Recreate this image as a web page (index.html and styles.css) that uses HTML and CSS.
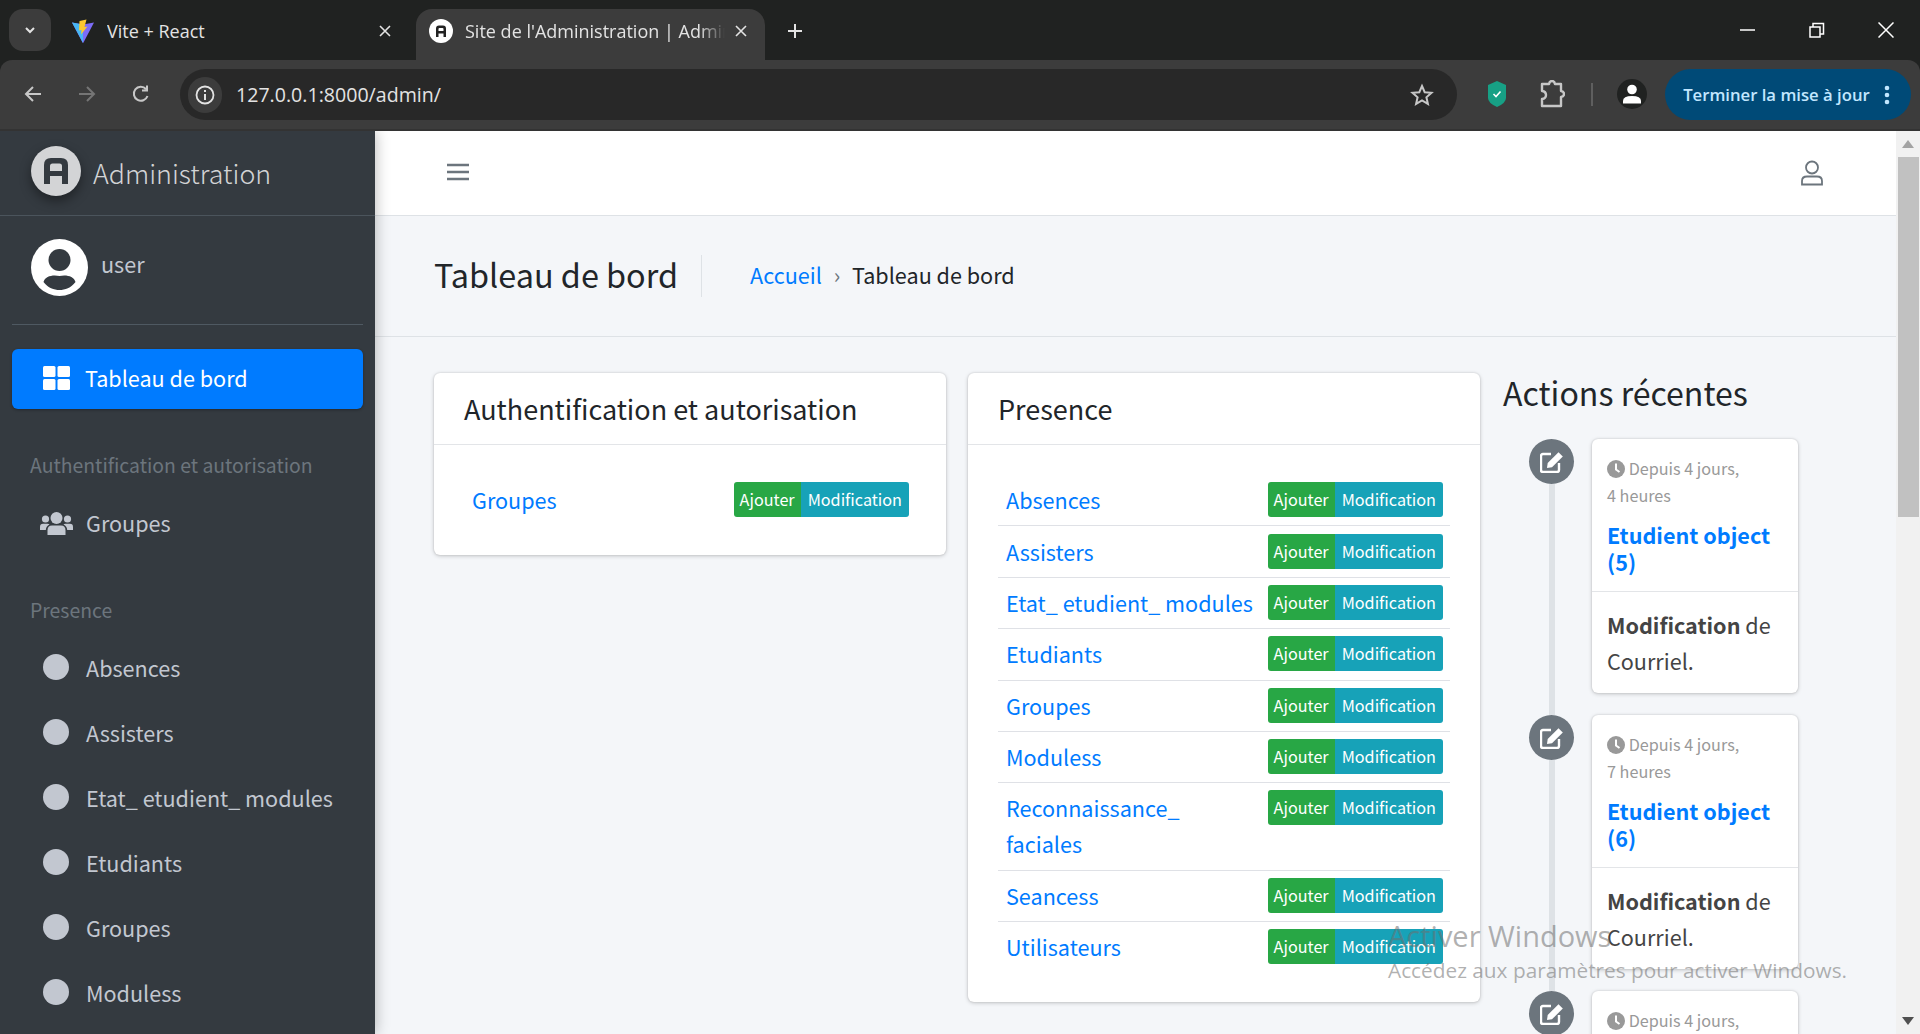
FILE: index.html

```html
<!DOCTYPE html>
<html lang="fr">
<head>
    <meta charset="utf-8">
    <title>Site de l'Administration</title>
    <link rel="stylesheet" href="styles.css">
</head>
<body>
    <!-- browser tabs -->
    <div class="tabstrip">
        <div class="tab-menu">
            <svg width="14" height="14" viewBox="0 0 14 14"><path d="M3 5l4 4 4-4" fill="none" stroke="#e3e3e3" stroke-width="2"/></svg>
        </div>
        <div class="tab">
            <svg class="favicon" width="24" height="24" viewBox="0 0 24 24">
                <path d="M1 3.5L12 5.5 23 3.5 12.500 23.500a.6 .6 0 0 1-1 0z" fill="#7c6cf7"/>
                <path d="M1 3.500L12 5.500 12 23.800z" fill="#47b8f5"/>
                <path d="M15.500 .5L8.500 2 8 11.500 10.500 11 10 15.500 16.500 7.500 13.500 8z" fill="#fdc82f"/>
            </svg>
            <span class="tab-title">Vite + React</span>
            <svg class="tab-close" width="12" height="12" viewBox="0 0 12 12"><path d="M1 1l10 10M11 1L1 11" stroke="#e3e3e3" stroke-width="1.600"/></svg>
        </div>
        <div class="tab tab-active">
            <svg class="favicon" width="24" height="24" viewBox="0 0 24 24">
                <circle cx="12" cy="12" r="12" fill="#fff"/>
                <path d="M7 18V9.500Q7 6.500 10 6.500H14Q17 6.500 17 9.500V18H14.500V14.500H9.500V18zM9.500 12H14.500V10Q14.500 9 13.500 9H10.500Q9.500 9 9.500 10z" fill="#222"/>
            </svg>
            <span class="tab-title tab-fade">Site de l'Administration | Admin</span>
            <svg class="tab-close" width="12" height="12" viewBox="0 0 12 12"><path d="M1 1l10 10M11 1L1 11" stroke="#e3e3e3" stroke-width="1.600"/></svg>
        </div>
        <div class="tab-new">
            <svg width="18" height="18" viewBox="0 0 18 18"><path d="M9 2v14M2 9h14" stroke="#e3e3e3" stroke-width="2"/></svg>
        </div>
        <div class="win-controls">
            <svg width="16" height="16" viewBox="0 0 16 16"><path d="M0 8h15" stroke="#fff" stroke-width="1.500"/></svg>
            <svg width="16" height="16" viewBox="0 0 16 16"><path d="M1 5h10v10H1zM4 5V1.500h10.500V12H11" fill="none" stroke="#fff" stroke-width="1.500"/></svg>
            <svg width="16" height="16" viewBox="0 0 16 16"><path d="M.5 .5l15 15M15.500 .5l-15 15" stroke="#fff" stroke-width="1.500"/></svg>
        </div>
    </div>

    <!-- browser toolbar -->
    <div class="toolbar">
        <svg class="nav-btn" width="20" height="20" viewBox="0 0 20 20"><path d="M18 10H3M10 3l-7 7 7 7" fill="none" stroke="#c7c7c7" stroke-width="2"/></svg>
        <svg class="nav-btn" width="20" height="20" viewBox="0 0 20 20"><path d="M2 10h15M10 3l7 7-7 7" fill="none" stroke="#757575" stroke-width="2"/></svg>
        <svg class="nav-btn" width="20" height="20" viewBox="0 0 20 20"><path d="M16.500 12a7 7 0 1 1-1.500-7M16 1.500V6.500H11" fill="none" stroke="#c7c7c7" stroke-width="2"/></svg>
        <div class="address">
            <div class="site-info">
                <svg width="20" height="20" viewBox="0 0 20 20"><circle cx="10" cy="10" r="8.500" fill="none" stroke="#e3e3e3" stroke-width="1.800"/><path d="M10 9v6M10 5v2" stroke="#e3e3e3" stroke-width="2"/></svg>
            </div>
            <span class="url">127.0.0.1:8000/admin/</span>
            <svg class="star" width="24" height="24" viewBox="0 0 24 24"><path d="M12 3l2.700 6.200 6.800 .6-5.100 4.500 1.500 6.600L12 17.400 6.100 20.900l1.500-6.600L2.500 9.800l6.800-.6z" fill="none" stroke="#c7c7c7" stroke-width="2"/></svg>
        </div>
        <svg class="shield" width="18" height="26" viewBox="0 0 18 26"><path d="M9 0L18 4V17Q18 22 9 26 0 22 0 17V4z" fill="#17a085"/><path d="M5.500 13l2.500 2.500 4.500-5" fill="none" stroke="#fff" stroke-width="1.600"/></svg>
        <svg class="puzzle" width="26" height="28" viewBox="0 0 26 28"><path d="M3 4H10Q10.500 1 13 1T16 4H22V11Q25 11.500 25 14T22 17V26H3V19Q7 18.500 7 15T3 11z" fill="none" stroke="#c7c7c7" stroke-width="2.400" stroke-linejoin="round"/></svg>
        <div class="tool-sep"></div>
        <div class="profile">
            <svg width="20" height="20" viewBox="0 0 20 20"><circle cx="10" cy="5.500" r="4.800" fill="#fff"/><path d="M1 19.500V17Q1 12 10 12T19 17V19.500z" fill="#fff"/></svg>
        </div>
        <div class="update">
            <span>Terminer la mise à jour</span>
            <svg width="6" height="20" viewBox="0 0 6 20"><circle cx="3" cy="3" r="2.300"/><circle cx="3" cy="10" r="2.300"/><circle cx="3" cy="17" r="2.300"/></svg>
        </div>
    </div>

    <div class="page">
        <!-- left menu -->
        <aside class="sidebar">
            <div class="brand">
                <svg class="brand-logo" width="50" height="50" viewBox="0 0 50 50">
                    <circle cx="25" cy="25" r="25" fill="#d3d4d6"/>
                    <path d="M13 38V19Q13 12 20 12H30Q37 12 37 19V38H31V30H19V38zM19 25H31V20Q31 17.500 28.500 17.500H21.500Q19 17.500 19 20z" fill="#343a40"/>
                </svg>
                <span class="brand-text">Administration</span>
            </div>
            <div class="user-panel">
                <svg width="57" height="57" viewBox="0 0 57 57">
                    <circle cx="28.500" cy="28.500" r="28.500" fill="#fff"/>
                    <circle cx="28.500" cy="21" r="11" fill="#343a40"/>
                    <path d="M12.500 43C14 37 22 35.500 28.500 37 35 35.500 43 37 44.500 43 40 49 34 51 28.500 51 23 51 17 49 12.500 43z" fill="#343a40"/>
                </svg>
                <span>user</span>
            </div>
            <nav class="menu">
                <a class="menu-link menu-active" href="#">
                    <span class="menu-icon">
                        <svg width="27" height="24" viewBox="0 0 27 24" fill="#fff">
                            <rect width="12.500" height="11" rx="1.500"/><rect x="14.500" width="12.500" height="11" rx="1.500"/>
                            <rect y="13" width="12.500" height="11" rx="1.500"/><rect x="14.500" y="13" width="12.500" height="11" rx="1.500"/>
                        </svg>
                    </span>
                    Tableau de bord
                </a>
                <div class="menu-header">Authentification et autorisation</div>
                <a class="menu-link" href="#">
                    <span class="menu-icon">
                        <svg width="33" height="24" viewBox="0 0 33 24" fill="#c2c7d0">
                            <circle cx="16.500" cy="7" r="6"/><circle cx="5.500" cy="8" r="3.600"/><circle cx="27.500" cy="8" r="3.600"/>
                            <path d="M7.500 24V19.500Q7.500 14.500 12 14.500H21Q25.500 14.500 25.500 19.500V24z"/>
                            <path d="M0 18V16Q0 12.800 3 12.800H7.500Q9 12.800 9.500 13.500 6 15 5.800 19H0zM33 18V16Q33 12.800 30 12.800H25.500Q24 12.800 23.500 13.500 27 15 27.200 19H33z"/>
                        </svg>
                    </span>
                    Groupes
                </a>
                <div class="menu-header">Presence</div>
                <a class="menu-link" href="#"><span class="menu-icon"><i class="dot"></i></span>Absences</a>
                <a class="menu-link" href="#"><span class="menu-icon"><i class="dot"></i></span>Assisters</a>
                <a class="menu-link" href="#"><span class="menu-icon"><i class="dot"></i></span>Etat_ etudient_ modules</a>
                <a class="menu-link" href="#"><span class="menu-icon"><i class="dot"></i></span>Etudiants</a>
                <a class="menu-link" href="#"><span class="menu-icon"><i class="dot"></i></span>Groupes</a>
                <a class="menu-link" href="#"><span class="menu-icon"><i class="dot"></i></span>Moduless</a>
            </nav>
        </aside>

        <div class="main">
            <header class="topbar">
                <svg class="burger" width="22" height="20" viewBox="0 0 22 20"><path d="M0 3h22M0 10h22M0 17h22" stroke="#6c757d" stroke-width="2.600"/></svg>
                <svg width="24" height="26" viewBox="0 0 24 26" fill="none" stroke="#6c757d" stroke-width="1.800"><circle cx="12" cy="7.500" r="6"/><path d="M2 24.500V21Q2 16.500 7 16.500H17Q22 16.500 22 21V24.500z"/></svg>
            </header>

            <div class="page-title">
                <h1>Tableau de bord</h1>
                <div class="crumbs">
                    <a href="#">Accueil</a>
                    <span class="crumb-sep">›</span>
                    <span>Tableau de bord</span>
                </div>
            </div>

            <div class="content">
                <section class="card card-auth">
                    <h2 class="card-title">Authentification et autorisation</h2>
                    <div class="card-body">
                        <div class="model-row">
                            <a href="#">Groupes</a>
                            <div class="btns"><span class="btn-add">Ajouter</span><span class="btn-edit">Modification</span></div>
                        </div>
                    </div>
                </section>

                <section class="card">
                    <h2 class="card-title">Presence</h2>
                    <div class="card-body">
                        <div class="model-row"><a href="#">Absences</a><div class="btns"><span class="btn-add">Ajouter</span><span class="btn-edit">Modification</span></div></div>
                        <div class="model-row"><a href="#">Assisters</a><div class="btns"><span class="btn-add">Ajouter</span><span class="btn-edit">Modification</span></div></div>
                        <div class="model-row"><a href="#">Etat_ etudient_ modules</a><div class="btns"><span class="btn-add">Ajouter</span><span class="btn-edit">Modification</span></div></div>
                        <div class="model-row"><a href="#">Etudiants</a><div class="btns"><span class="btn-add">Ajouter</span><span class="btn-edit">Modification</span></div></div>
                        <div class="model-row"><a href="#">Groupes</a><div class="btns"><span class="btn-add">Ajouter</span><span class="btn-edit">Modification</span></div></div>
                        <div class="model-row"><a href="#">Moduless</a><div class="btns"><span class="btn-add">Ajouter</span><span class="btn-edit">Modification</span></div></div>
                        <div class="model-row"><a href="#">Reconnaissance_<br>faciales</a><div class="btns"><span class="btn-add">Ajouter</span><span class="btn-edit">Modification</span></div></div>
                        <div class="model-row"><a href="#">Seancess</a><div class="btns"><span class="btn-add">Ajouter</span><span class="btn-edit">Modification</span></div></div>
                        <div class="model-row"><a href="#">Utilisateurs</a><div class="btns"><span class="btn-add">Ajouter</span><span class="btn-edit">Modification</span></div></div>
                    </div>
                </section>

                <section class="actions">
                    <h3>Actions récentes</h3>
                    <div class="tl-item">
                        <div class="tl-rail">
                            <div class="tl-icon"><svg width="24" height="22" viewBox="0 0 24 22"><path d="M11 3H3Q1 3 1 5V19Q1 21 3 21H17Q19 21 19 19V12" fill="none" stroke="#fff" stroke-width="2.400"/><path d="M18.500 1.200L22.800 5.500 12 16.300 7 17 7.700 12z" fill="#fff"/></svg></div>
                            <div class="tl-line"></div>
                        </div>
                        <div class="tl-card">
                            <div class="tl-head">
                                <div class="tl-time"><svg width="18" height="18" viewBox="0 0 18 18"><circle cx="9" cy="9" r="9" fill="#999"/><path d="M9 3.500V9.500L12.500 12" fill="none" stroke="#fff" stroke-width="2"/></svg> Depuis 4 jours,<br>4 heures</div>
                                <a class="tl-link" href="#">Etudient object (5)</a>
                            </div>
                            <div class="tl-body"><b>Modification</b> de Courriel.</div>
                        </div>
                    </div>
                    <div class="tl-item">
                        <div class="tl-rail">
                            <div class="tl-icon"><svg width="24" height="22" viewBox="0 0 24 22"><path d="M11 3H3Q1 3 1 5V19Q1 21 3 21H17Q19 21 19 19V12" fill="none" stroke="#fff" stroke-width="2.400"/><path d="M18.500 1.200L22.800 5.500 12 16.300 7 17 7.700 12z" fill="#fff"/></svg></div>
                            <div class="tl-line"></div>
                        </div>
                        <div class="tl-card">
                            <div class="tl-head">
                                <div class="tl-time"><svg width="18" height="18" viewBox="0 0 18 18"><circle cx="9" cy="9" r="9" fill="#999"/><path d="M9 3.500V9.500L12.500 12" fill="none" stroke="#fff" stroke-width="2"/></svg> Depuis 4 jours,<br>7 heures</div>
                                <a class="tl-link" href="#">Etudient object (6)</a>
                            </div>
                            <div class="tl-body"><b>Modification</b> de Courriel.</div>
                        </div>
                    </div>
                    <div class="tl-item">
                        <div class="tl-rail">
                            <div class="tl-icon"><svg width="24" height="22" viewBox="0 0 24 22"><path d="M11 3H3Q1 3 1 5V19Q1 21 3 21H17Q19 21 19 19V12" fill="none" stroke="#fff" stroke-width="2.400"/><path d="M18.500 1.200L22.800 5.500 12 16.300 7 17 7.700 12z" fill="#fff"/></svg></div>
                            <div class="tl-line"></div>
                        </div>
                        <div class="tl-card">
                            <div class="tl-head">
                                <div class="tl-time"><svg width="18" height="18" viewBox="0 0 18 18"><circle cx="9" cy="9" r="9" fill="#999"/><path d="M9 3.500V9.500L12.500 12" fill="none" stroke="#fff" stroke-width="2"/></svg> Depuis 4 jours,<br>4 heures</div>
                            </div>
                        </div>
                    </div>
                </section>
            </div>
        </div>

        <!-- scrollbar of the page -->
        <div class="scrollbar">
            <div class="scroll-arrow"><svg width="12" height="8" viewBox="0 0 12 8"><path d="M6 0l6 8H0z" fill="#a3a3a3"/></svg></div>
            <div class="scroll-thumb"></div>
            <div class="scroll-track"></div>
            <div class="scroll-arrow"><svg width="12" height="8" viewBox="0 0 12 8"><path d="M6 8L0 0h12z" fill="#505050"/></svg></div>
        </div>

        <!-- windows watermark sits over the page -->
        <div class="watermark">
            <div class="wm-title">Activer Windows</div>
            <div class="wm-sub">Accédez aux paramètres pour activer Windows.</div>
        </div>
    </div>
</body>
</html>
```

FILE: styles.css

```css
/* Source Sans look: the latin of Noto Sans CJK is the same design, drawn about 10% bigger */
body {
    margin: 0;
    height: 1034px;
    overflow: hidden;
    background: #202221;
    font-family: "Noto Sans CJK SC", "Noto Sans", sans-serif;
    font-size: 21.600px;
    line-height: 36px;
    color: #212529;
}
a { color: #007bff; text-decoration: none; }

/* browser tabs */
.tabstrip {
    height: 60px;
    display: flex;
    background: #202221;
    font-family: "Open Sans", sans-serif;
    color: #e3e3e3;
    font-size: 18px;
}
.tab-menu {
    width: 42px;
    height: 42px;
    margin: 9px 0 0 9px;
    border-radius: 14px;
    background: #3c3c3c;
    display: flex;
    align-items: center;
    justify-content: center;
}
.tab {
    width: 349px;
    height: 51px;
    margin: 9px 0 0 7px;
    padding: 0 18px 8px 13px;
    box-sizing: border-box;
    display: flex;
    align-items: center;
    border-radius: 16px 16px 0 0;
}
.tab:nth-child(2) { width: 358px; margin-left: 7px; padding-right: 25px; }
.tab-active { background: #3c3c3c; margin-left: 0; }
.favicon { flex: none; margin-right: 12px; }
.tab-title { flex: 1; white-space: nowrap; overflow: hidden; line-height: 24px; }
.tab-fade { -webkit-mask-image: linear-gradient(to right, #000 90%, transparent 100%); mask-image: linear-gradient(to right, #000 90%, transparent 100%); }
.tab-close { flex: none; margin-left: 10px; }
.tab-new { margin: 15px 0 0 21px; height: 18px; }
.win-controls {
    margin-left: auto;
    width: 180px;
    padding: 22px 26px 0 0;
    box-sizing: border-box;
    display: flex;
    justify-content: space-between;
    align-items: flex-start;
}

/* browser toolbar */
.toolbar {
    height: 71px;
    box-sizing: border-box;
    border-bottom: 2px solid #333;
    padding: 9px 9px 0 23px;
    display: flex;
    align-items: flex-start;
    background: #3c3c3c;
    border-radius: 12px 12px 0 0;
}
.nav-btn { flex: none; margin: 15px 34px 0 0; }
.address {
    width: 1278px;
    height: 51px;
    margin-left: -5px;
    box-sizing: border-box;
    padding-left: 8px;
    display: flex;
    align-items: center;
    border-radius: 26px;
    background: #282828;
    color: #e3e3e3;
    font-family: "Open Sans", sans-serif;
    font-size: 19.600px;
}
.site-info {
    width: 34px;
    height: 36px;
    border-radius: 18px;
    background: #3c3c3c;
    display: flex;
    align-items: center;
    justify-content: center;
}
.url { margin-left: 14px; line-height: 24px; }
.star { margin-left: auto; margin-right: 23px; }
.shield { flex: none; margin: 12px 0 0 31px; }
.puzzle { flex: none; margin: 11px 0 0 33px; }
.tool-sep { width: 2px; height: 23px; margin: 14px 0 0 26px; background: #5f5f5f; }
.profile {
    width: 30px;
    height: 30px;
    margin: 10px 0 0 24px;
    border-radius: 50%;
    background: #202221;
    display: flex;
    align-items: center;
    justify-content: center;
}
.update {
    width: 246px;
    height: 51px;
    margin-left: 18px;
    box-sizing: border-box;
    padding: 0 21px 0 18px;
    display: flex;
    align-items: center;
    justify-content: space-between;
    border-radius: 26px;
    background: #004a77;
    color: #c2e7ff;
    font-family: "Open Sans", sans-serif;
    font-size: 16.700px;
    font-weight: 600;
    white-space: nowrap;
}
.update svg { fill: #c2e7ff; }

/* page under the browser bars */
.page {
    height: 903px;
    display: flex;
    overflow: hidden;
    position: relative;
    background: #f4f6f9;
}

/* left menu */
.sidebar {
    flex: none;
    width: 375px;
    background: #343a40;
    color: #c2c7d0;
    box-shadow: 0 0 14px rgba(0,0,0,.3);
    position: relative;
}
.brand {
    height: 85px;
    box-sizing: border-box;
    padding: 15px 0 0 31px;
    display: flex;
    align-items: flex-start;
    border-bottom: 1px solid #4b545c;
}
.brand-logo { filter: drop-shadow(0 5px 6px rgba(0,0,0,.4)); }
.brand-text { margin: 4px 0 0 12px; font-size: 26.800px; font-weight: 300; line-height: 45px; color: rgba(255,255,255,.8); }
.user-panel {
    height: 109px;
    box-sizing: border-box;
    margin: 0 12px;
    padding: 23px 0 0 19px;
    display: flex;
    align-items: flex-start;
    border-bottom: 1px solid #4f5962;
}
.user-panel span { margin: 7px 0 0 13px; }
.menu { padding: 24px 12px 0; }
.menu-link {
    height: 60px;
    box-sizing: border-box;
    margin-bottom: 5px;
    padding: 0 0 3px 27px;
    display: flex;
    align-items: center;
    border-radius: 6px;
    color: #c2c7d0;
    white-space: nowrap;
}
.menu-active { background: #007bff; color: #fff; box-shadow: 0 1px 3px rgba(0,0,0,.3); }
.menu-icon { width: 46px; flex: none; display: flex; margin-left: 1px; }
.menu-active .menu-icon { padding-left: 3px; width: 42px; }
.dot { width: 26px; height: 26px; margin: -1px 0 0 3px; border-radius: 50%; background: #c2c7d0; }
.menu-header {
    height: 58px;
    margin-top: 27px;
    padding-left: 18px;
    font-size: 19.400px;
    line-height: 58px;
    color: #6c757d;
    white-space: nowrap;
}

/* top bar of the admin */
.main { flex: 1; min-width: 0; }
.topbar {
    height: 84px;
    padding: 0 72px;
    display: flex;
    align-items: center;
    justify-content: space-between;
    background: #fff;
    border-bottom: 1px solid #dee2e6;
}
.burger { margin-bottom: 2px; }
.page-title {
    height: 120px;
    padding-left: 59px;
    display: flex;
    align-items: center;
    border-bottom: 1px solid #dee2e6;
}
.page-title h1 {
    margin: 0;
    padding: 0 23px 4px 0;
    font-size: 32.400px;
    font-weight: 400;
    line-height: 38px;
    border-right: 1px solid #dee2e6;
}
.crumbs { margin: 0 0 2px 48px; }
.crumb-sep { margin: 0 7px; color: #6c757d; }

/* cards */
.content { padding: 36px 0 0 59px; display: flex; align-items: flex-start; }
.card {
    width: 512px;
    margin-right: 22px;
    flex: none;
    background: #fff;
    border-radius: 6px;
    box-shadow: 0 0 2px rgba(0,0,0,.13), 0 1px 4px rgba(0,0,0,.2);
}
.card-title {
    margin: 0;
    padding: 0 30px;
    height: 71px;
    font-size: 27px;
    font-weight: 400;
    line-height: 71px;
    border-bottom: 1px solid #e3e5e8;
}
.card-body { padding: 30px; }
.model-row {
    padding: 7.200px 7px 7.200px 8px;
    display: flex;
    align-items: flex-start;
    justify-content: space-between;
    border-bottom: 1px solid #dfe1e6;
}
.model-row:last-child { border-bottom: 0; }
.btns { display: flex; flex: none; font-size: 16.200px; line-height: 35px; color: #fff; }
.btn-add { background: #28a745; padding: 0 6px; border-radius: 3px 0 0 3px; }
.btn-edit { background: #17a2b8; padding: 0 7px; border-radius: 0 3px 3px 0; }

/* recent actions */
.actions { flex: none; width: 300px; margin: -8px 0 0 1px; }
.actions h3 { margin: 0 0 20px; font-size: 32.100px; font-weight: 400; line-height: 54px; white-space: nowrap; }
.tl-item { display: flex; margin-left: 26px; }
.tl-rail { flex: none; width: 45px; margin-right: 18px; display: flex; flex-direction: column; align-items: center; }
.tl-icon {
    flex: none;
    width: 45px;
    height: 45px;
    border-radius: 50%;
    background: #6c757d;
    display: flex;
    align-items: center;
    justify-content: center;
}
.tl-line { flex: 1; width: 6px; background: #dee2e6; }
.tl-card {
    width: 206px;
    margin-bottom: 22px;
    background: #fff;
    border-radius: 6px;
    box-shadow: 0 0 2px rgba(0,0,0,.13), 0 1px 4px rgba(0,0,0,.2);
}
.tl-head { padding: 16px 15px; border-bottom: 1px solid #e3e5e8; }
.tl-time { font-size: 16.200px; line-height: 27px; color: #999; }
.tl-time svg { vertical-align: -3px; }
.tl-link { display: block; margin-top: 12px; font-weight: 700; line-height: 27px; color: #007bff; }
.tl-body { padding: 15px 15px 14px; color: #444; }
.tl-body b { font-weight: 700; }

/* scrollbar */
.scrollbar { flex: none; width: 24px; display: flex; flex-direction: column; align-items: center; background: #f1f1f1; }
.scroll-arrow { height: 26px; width: 100%; display: flex; align-items: center; justify-content: center; }
.scroll-thumb { width: 21px; height: 360px; background: #c1c1c1; }
.scroll-track { flex: 1; }

/* windows watermark */
.watermark {
    position: absolute;
    left: 1388px;
    top: 786px;
    font-family: "Open Sans", sans-serif;
    color: rgba(110,110,110,.55);
    white-space: nowrap;
    pointer-events: none;
}
.wm-title { font-size: 29px; line-height: 38px; }
.wm-sub { font-size: 20.800px; line-height: 30px; }
```
